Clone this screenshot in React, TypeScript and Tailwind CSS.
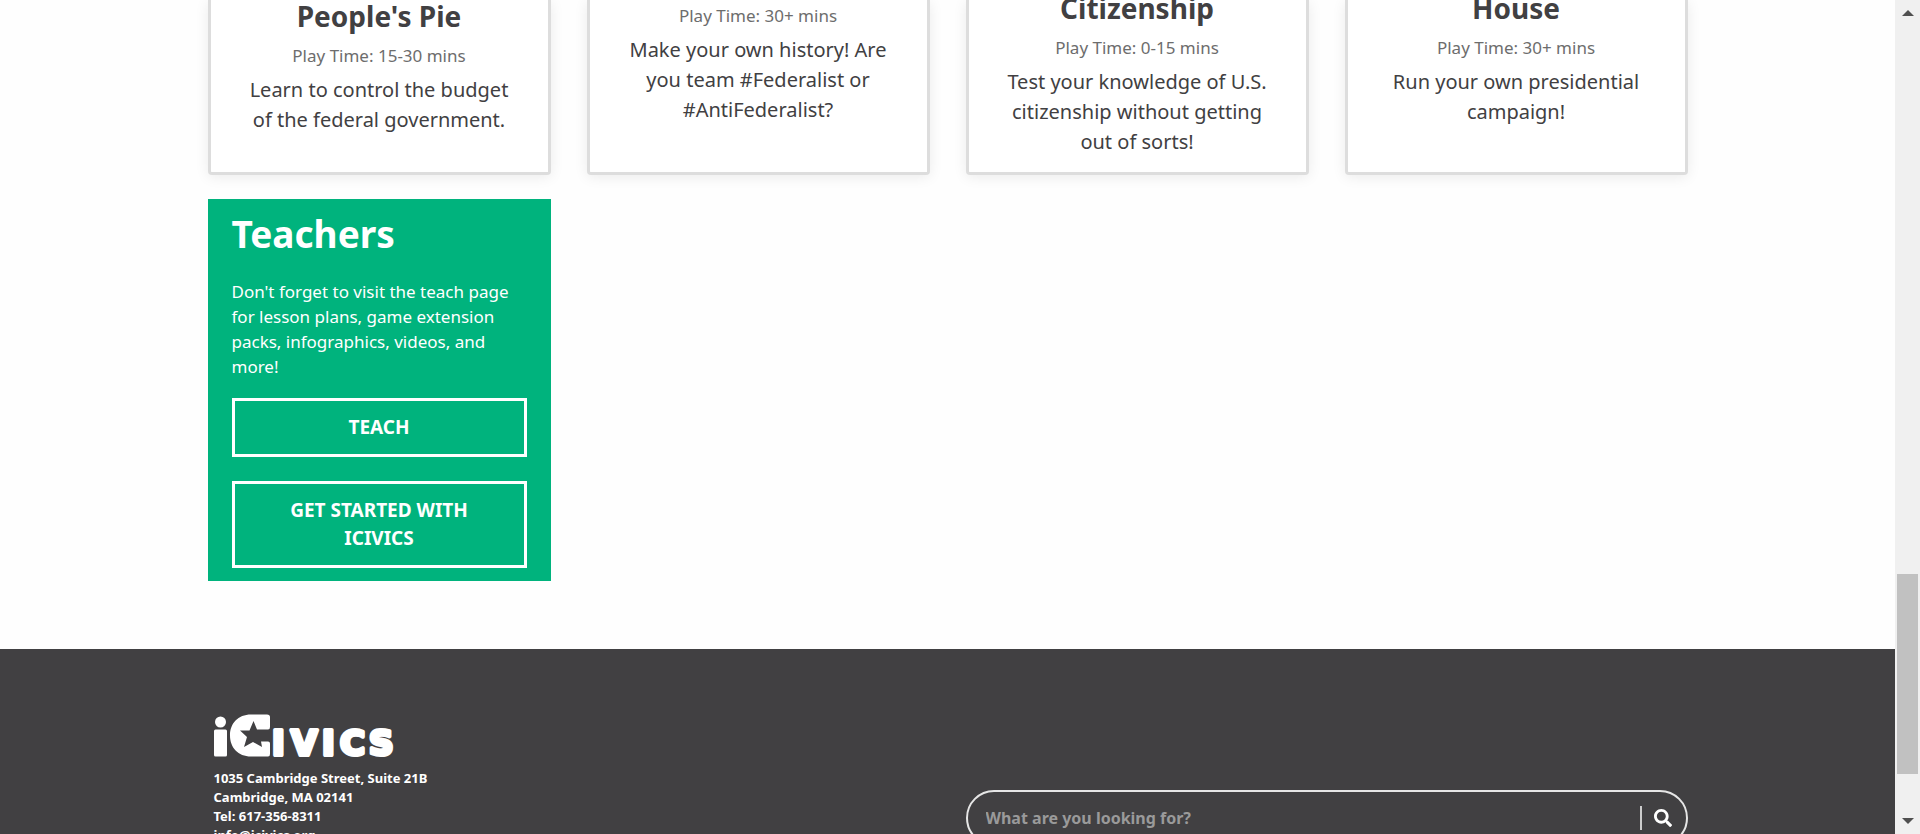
import { FaSearch } from "react-icons/fa";

type Game = {
  title: string;
  time: string;
  text: string;
  start: string;
};

const games: Game[] = [
  { title: "People's Pie", time: "15-30 mins", text: "Learn to control the budget of the federal government.", start: "pt-0" },
  { title: "", time: "30+ mins", text: "Make your own history! Are you team #Federalist or #AntiFederalist?", start: "pt-1" },
  { title: "Citizenship", time: "0-15 mins", text: "Test your knowledge of U.S. citizenship without getting out of sorts!", start: "-mt-2" },
  { title: "House", time: "30+ mins", text: "Run your own presidential campaign!", start: "-mt-2" },
];

const heading = "font-['Noto_Sans',sans-serif] font-bold";

function GameCard({ game }: { game: Game }) {
  return (
    <article className="h-[175px] rounded-b border-[3px] border-t-0 border-[#dddddd] bg-white px-8 text-center shadow-[0_2px_14px_rgba(0,0,0,0.08)]">
      <div className={game.start}>
        {game.title && (
          <h2 className={`${heading} pb-3 text-[28px] leading-8`}>{game.title}</h2>
        )}
        <p className="text-[17px] leading-6 text-[#6d6d6d]">Play Time: {game.time}</p>
        <p className="pt-[7px] text-xl leading-[30px]">{game.text}</p>
      </div>
    </article>
  );
}

function TeacherButton({ children }: { children: string }) {
  return (
    <a
      href="#teach"
      className={`${heading} block border-[3px] border-white px-10 pb-[13px] pt-3 text-center text-[19px] leading-7`}
    >
      {children}
    </a>
  );
}

function Logo() {
  return (
    <svg viewBox="0 0 182 44" className="h-11 w-[182px]" fill="#fff" role="img" aria-label="iCivics">
      <circle cx="6.500" cy="8" r="5.500" />
      <rect x="0" y="15.500" width="13" height="27" rx="1.500" />
      <path d="M37 0.500H53Q56 0.500 56 3V13Q56 15.500 54 15.500H43L39.500 7L35.500 16.500H26L33 23L30 33L39 28L48 33L47 27.500H54Q56 27.500 56 29.500V40Q56 42.500 54 42.500H37C24 42.500 16 33.500 16 21.500C16 9.500 24 0.500 37 0.500Z" />
      <text
        y="41"
        className="font-['DejaVu_Sans',sans-serif] text-[34px] font-bold"
        stroke="#fff"
        strokeWidth="4"
        strokeLinejoin="round"
      >
        <tspan x="58">I</tspan>
        <tspan x="77">V</tspan>
        <tspan x="108">I</tspan>
        <tspan x="126">C</tspan>
        <tspan x="155">S</tspan>
      </text>
    </svg>
  );
}

function Scrollbar() {
  return (
    <div aria-hidden="true" className="flex w-[25px] shrink-0 flex-col items-center bg-[#f0f0f0] px-0.5 py-2.5">
      <svg viewBox="0 0 12 6" className="h-1.5 w-3" fill="#505050">
        <path d="M6 0L12 6H0Z" />
      </svg>
      <div className="grow-[558]" />
      <div className="w-full grow-[200] bg-[#c1c1c1]" />
      <div className="grow-[44]" />
      <svg viewBox="0 0 12 6" className="h-1.5 w-3" fill="#505050">
        <path d="M6 6L0 0H12Z" />
      </svg>
    </div>
  );
}

export default function App() {
  return (
    <div className="flex h-screen overflow-hidden bg-[#fefefe] font-['Noto_Sans',sans-serif] text-[#414042]">
      <div className="flex min-w-0 grow flex-col overflow-hidden">
        <main className="mx-auto grid w-full max-w-[1480px] shrink-0 grid-cols-4 gap-x-9 gap-y-6 pb-[68px]">
          {games.map((game) => (
            <GameCard key={game.text} game={game} />
          ))}
          <section className="bg-[#00b37d] px-6 pb-[13px] pt-3 text-white">
            <h2 className={`${heading} text-[37px] leading-[46px]`}>Teachers</h2>
            <p className="pb-[19px] pt-[22px] text-[17px] leading-[25px]">
              Don't forget to visit the teach page for lesson plans, game extension packs, infographics, videos, and more!
            </p>
            <div className="flex flex-col gap-6">
              <TeacherButton>TEACH</TeacherButton>
              <TeacherButton>GET STARTED WITH ICIVICS</TeacherButton>
            </div>
          </section>
        </main>
        <footer className="shrink-0 grow bg-[#414042] pt-[65px] text-white">
          <div className="mx-auto grid w-full max-w-[1480px] grid-cols-2 gap-x-9">
            <div className="pl-1.5">
              <a href="#home" className="block">
                <Logo />
              </a>
              <address className={`${heading} pt-[11px] text-[13px] not-italic leading-[19px]`}>
                <p>1035 Cambridge Street, Suite 21B</p>
                <p>Cambridge, MA 02141</p>
                <p>Tel: 617-356-8311</p>
                <a href="#mail">info@icivics.org</a>
              </address>
            </div>
            <form className="mt-[76px] flex h-14 items-center rounded-[28px] border-2 border-[#e6e6e6] pl-[18px] pr-3.5">
              <input
                type="text"
                aria-label="Search"
                placeholder="What are you looking for?"
                className={`${heading} min-w-0 grow bg-transparent text-base outline-none placeholder:text-[#9a9a9a]`}
              />
              <button type="button" aria-label="Submit search" className="flex h-6 items-center border-l-2 border-[#cccccc] pl-3">
                <FaSearch className="size-[18px]" />
              </button>
            </form>
          </div>
        </footer>
      </div>
      <Scrollbar />
    </div>
  );
}
